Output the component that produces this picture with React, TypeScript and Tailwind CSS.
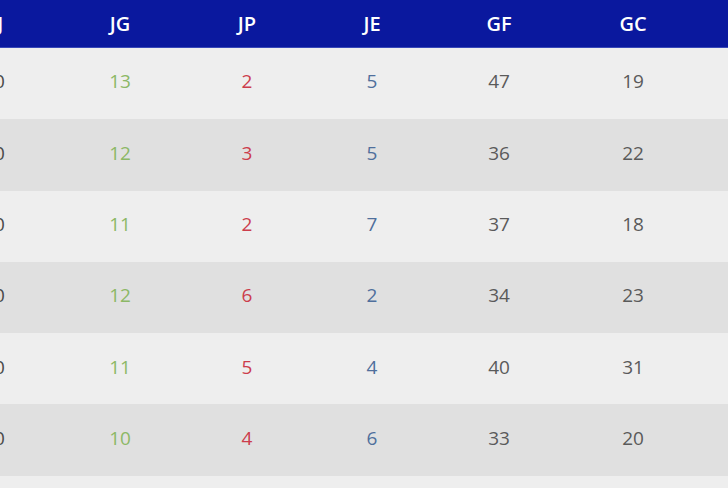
import React from "react";

const rows = [
  ["20", "13", "2", "5", "47", "19"],
  ["20", "12", "3", "5", "36", "22"],
  ["20", "11", "2", "7", "37", "18"],
  ["20", "12", "6", "2", "34", "23"],
  ["20", "11", "5", "4", "40", "31"],
  ["20", "10", "4", "6", "33", "20"],
  ["20", "9", "6", "5", "30", "21"],
];

const widths = ["w-[124px]", "w-[128px]", "w-[126px]", "w-[124px]", "w-[130px]", "w-[138px]", "w-[128px]"];
const colors = [
  "text-[#4a4a4a]",
  "text-[#8cb866]",
  "text-[#cc3d4c]",
  "text-[#4f6f9c]",
  "text-[#5a5a5a]",
  "text-[#5a5a5a]",
  "text-[#5a5a5a]",
];
const headers = ["PJ", "JG", "JP", "JE", "GF", "GC", "DG"];

export default function App() {
  return (
    <div
      className="w-[728px] h-[488px] overflow-hidden bg-[#eeeeee]"
      style={{ fontFamily: '"Open Sans", "Noto Sans", sans-serif' }}
    >
      <div className="ml-[-68px] w-[900px]">
        <div className="flex h-[48px] items-center bg-[#0a189e] border-b border-[#3848b8]">
          {headers.map((h, i) => (
            <div key={i} className={`${widths[i]} shrink-0 text-center text-[20px] font-semibold text-white`}>
              {h}
            </div>
          ))}
        </div>
        {rows.map((r, ri) => (
          <div
            key={ri}
            className={`flex h-[71.3px] items-center pb-[4px] ${ri % 2 === 0 ? "bg-[#eeeeee]" : "bg-[#e0e0e0]"}`}
          >
            {r.concat(["0"]).map((c, i) => (
              <div key={i} className={`${widths[i]} shrink-0 text-center text-[19px] ${colors[i]}`}>
                {c}
              </div>
            ))}
          </div>
        ))}
      </div>
    </div>
  );
}
